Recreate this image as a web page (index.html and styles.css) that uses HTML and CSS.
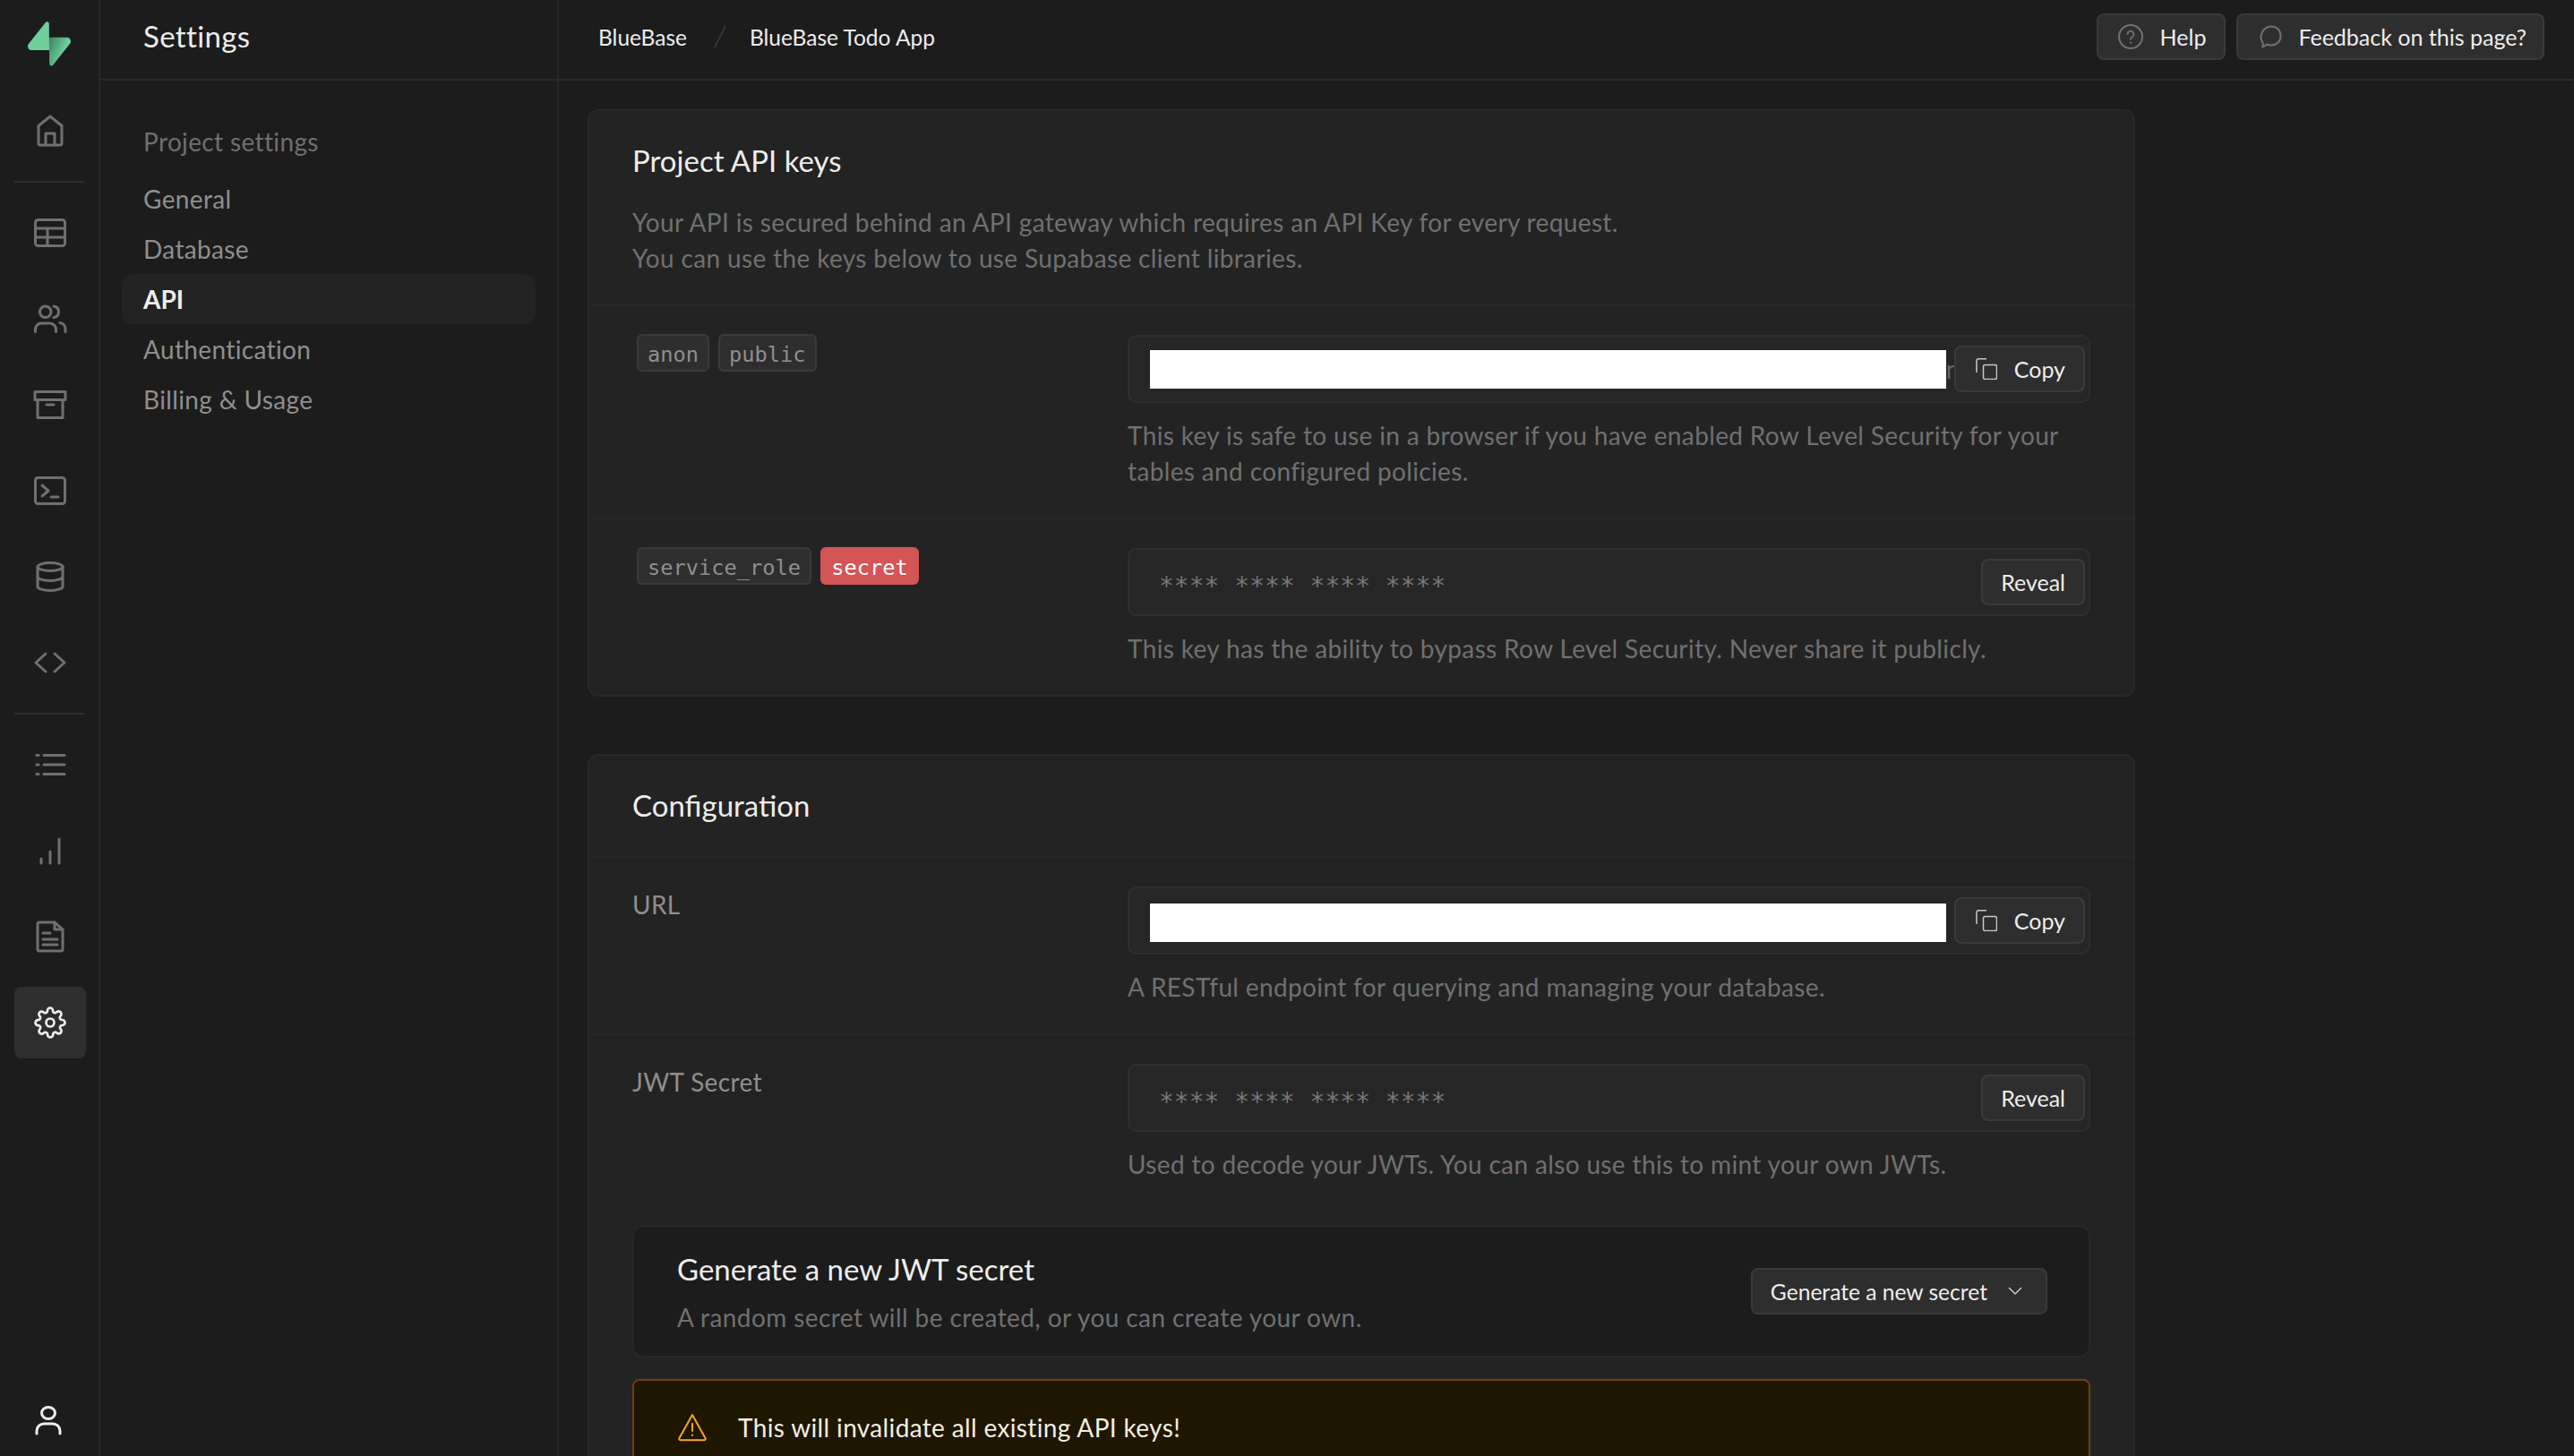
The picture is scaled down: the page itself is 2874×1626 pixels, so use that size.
FILE: index.html
```html
<!DOCTYPE html>
<html>
<head>
<meta charset="UTF-8">
<title>API Settings</title>
<link rel="stylesheet" href="styles.css">
</head>
<body>
<div class="app">
	<nav class="rail">
		<a class="logo">
			<svg width="48" height="50" viewBox="0 0 109 113">
				<defs>
					<linearGradient id="boltShade" x1="54" y1="55" x2="94" y2="72" gradientUnits="userSpaceOnUse">
						<stop offset="0" stop-color="#3f8a66"/>
						<stop offset="1" stop-color="#6fcf9c"/>
					</linearGradient>
				</defs>
				<path fill="url(#boltShade)" d="M63.7 110.3C60.8 113.9 55 111.9 55 107.3L54 40.1H99.2C107.4 40.1 112 49.5 106.9 55.9L63.7 110.3Z"/>
				<path fill="#6fcf9c" d="M45.3 2.1C48.2-1.5 54 .4 54 5L54.5 72.3H9.8C1.6 72.3-2.9 62.8 2.2 56.4L45.3 2.1Z"/>
			</svg>
		</a>
		<a class="railItem home">
			<svg class="ico" viewBox="0 0 48 48"><path d="M11 18.500 24 8l13 10.500V38a2 2 0 0 1-2 2H13a2 2 0 0 1-2-2V18.500Z"/><path d="M19 40V27h10v13"/></svg>
		</a>
		<div class="railLine"></div>
		<a class="railItem">
			<svg class="ico" viewBox="0 0 48 48"><rect x="7.500" y="9.500" width="33" height="29" rx="3"/><path d="M7.500 19h33M7.500 29h33M21 19v19.500"/></svg>
		</a>
		<a class="railItem">
			<svg class="ico" viewBox="0 0 48 48"><circle cx="18.700" cy="16.300" r="6.300"/><path d="M28 10c3.500.4 5.500 3 5.500 6.300s-2 5.800-5.500 6.300"/><path d="M7.500 38.500V36c0-4 3-7 7-7h9c4 0 7 3 7 7v2.500"/><path d="M35 28.500c3.500.5 6 3.400 6 7v3"/></svg>
		</a>
		<a class="railItem">
			<svg class="ico" viewBox="0 0 48 48"><path d="M7 9.500h34v9H7zM10 18.500v20h28v-20M20 24h8"/></svg>
		</a>
		<a class="railItem">
			<svg class="ico" viewBox="0 0 48 48"><rect x="7.500" y="9.500" width="33" height="29" rx="3"/><path d="m15 18 7 6-7 6M25 31h8"/></svg>
		</a>
		<a class="railItem">
			<svg class="ico" viewBox="0 0 48 48"><ellipse cx="24" cy="13" rx="14" ry="4.500"/><path d="M10 13v22c0 2.500 6.300 4.500 14 4.500S38 37.500 38 35V13M10 24c0 2.500 6.300 4.500 14 4.500S38 26.500 38 24"/></svg>
		</a>
		<a class="railItem">
			<svg class="ico" viewBox="0 0 48 48"><path d="M19 14 8 24l11 10M29 14l11 10-11 10"/></svg>
		</a>
		<div class="railLine"></div>
		<a class="railItem">
			<svg class="ico" viewBox="0 0 48 48"><path d="M17 13.500h23M17 24h23M17 34.500h23M9 13.500h2M9 24h2M9 34.500h2"/></svg>
		</a>
		<a class="railItem">
			<svg class="ico" viewBox="0 0 48 48"><path d="M14 33v5M24 25v13M34 11v27"/></svg>
		</a>
		<a class="railItem">
			<svg class="ico" viewBox="0 0 48 48"><path d="M10 10a2 2 0 0 1 2-2h17l9 8v22a2 2 0 0 1-2 2H12a2 2 0 0 1-2-2V10Z"/><path d="M29 8v8h9M16 20h8M16 27h16M16 33h16"/></svg>
		</a>
		<a class="railItem active">
			<svg class="gear" viewBox="0 0 24 24"><circle cx="12" cy="12" r="3"/><path d="M19.4 15a1.65 1.65 0 0 0 .33 1.82l.06.06a2 2 0 0 1 0 2.83 2 2 0 0 1-2.83 0l-.06-.06a1.65 1.65 0 0 0-1.82-.33 1.65 1.65 0 0 0-1 1.51V21a2 2 0 0 1-2 2 2 2 0 0 1-2-2v-.09A1.65 1.65 0 0 0 9 19.4a1.65 1.65 0 0 0-1.82.33l-.06.06a2 2 0 0 1-2.83 0 2 2 0 0 1 0-2.83l.06-.06a1.65 1.65 0 0 0 .33-1.82 1.65 1.65 0 0 0-1.51-1H3a2 2 0 0 1-2-2 2 2 0 0 1 2-2h.09A1.65 1.65 0 0 0 4.600 9a1.65 1.65 0 0 0-.33-1.82l-.06-.06a2 2 0 0 1 0-2.83 2 2 0 0 1 2.83 0l.06.06a1.65 1.65 0 0 0 1.82.33H9a1.65 1.65 0 0 0 1-1.51V3a2 2 0 0 1 2-2 2 2 0 0 1 2 2v.09a1.65 1.65 0 0 0 1 1.51 1.65 1.65 0 0 0 1.82-.33l.06-.06a2 2 0 0 1 2.83 0 2 2 0 0 1 0 2.83l-.06.06a1.65 1.65 0 0 0-.33 1.82V9a1.65 1.65 0 0 0 1.51 1H21a2 2 0 0 1 2 2 2 2 0 0 1-2 2h-.09a1.65 1.65 0 0 0-1.51 1z"/></svg>
		</a>
		<a class="railUser">
			<svg class="userIco" viewBox="0 0 36 36"><ellipse cx="18" cy="10" rx="7.500" ry="6.500"/><path d="M5 33v-3c0-5 4-8 8-8h10c4 0 8 3 8 8v3"/></svg>
		</a>
	</nav>

	<aside class="sideNav">
		<header class="sideHead">Settings</header>
		<div class="sideBody">
			<p class="sideLabel">Project settings</p>
			<a class="sideLink">General</a>
			<a class="sideLink">Database</a>
			<a class="sideLink current">API</a>
			<a class="sideLink">Authentication</a>
			<a class="sideLink">Billing &amp; Usage</a>
		</div>
	</aside>

	<main class="main">
		<header class="topBar">
			<div class="crumbs">
				<span>BlueBase</span>
				<svg class="crumbSep" viewBox="0 0 14 26"><path d="M13 1 1 25"/></svg>
				<span>BlueBase Todo App</span>
			</div>
			<div class="topActions">
				<a class="btn">
					<svg class="btnIco" viewBox="0 0 28 28"><circle cx="14" cy="14" r="13"/><path d="M10.500 11a3.500 3.500 0 1 1 5.500 3c-1.300.8-2 1.500-2 3M14 20.500v.5"/></svg>
					Help
				</a>
				<a class="btn feedback">
					<svg class="btnIco" viewBox="0 0 28 28"><path d="M5 25.500c.8-2 1-3 .6-4.500C3.800 18.500 3 16 3.500 13 4.500 7 9 2.500 15 2.500c6 0 10.500 4.500 10.500 10.500S21 23.500 15 23.500c-2 0-3.500-.3-5-1-1.500 1.500-3 2.500-5 3Z"/></svg>
					Feedback on this page?
				</a>
			</div>
		</header>

		<div class="content">
			<section class="card">
				<div class="cardHead">
					<h2 class="cardTitle">Project API keys</h2>
					<p class="cardDesc">Your API is secured behind an API gateway which requires an API Key for every request.<br>You can use the keys below to use Supabase client libraries.</p>
				</div>
				<div class="row">
					<div class="tags"><code class="tag">anon</code><code class="tag">public</code></div>
					<div>
						<div class="field">
							<div class="redact"></div>
							<span class="peek">n</span>
							<a class="btn small"><svg class="copyIco" viewBox="0 0 24 24"><rect x="8.500" y="7.500" width="15" height="16" rx="2"/><path d="M12 .800H3a2 2 0 0 0-2 2V16"/></svg>Copy</a>
						</div>
						<p class="help">This key is safe to use in a browser if you have enabled Row Level Security for your tables and configured policies.</p>
					</div>
				</div>
				<div class="row">
					<div class="tags"><code class="tag">service_role</code><code class="tag danger">secret</code></div>
					<div>
						<div class="field">
							<span class="mask">**** **** **** ****</span>
							<a class="btn small">Reveal</a>
						</div>
						<p class="help">This key has the ability to bypass Row Level Security. Never share it publicly.</p>
					</div>
				</div>
			</section>

			<section class="card">
				<div class="cardHead">
					<h2 class="cardTitle">Configuration</h2>
				</div>
				<div class="row">
					<label class="rowLabel">URL</label>
					<div>
						<div class="field">
							<div class="redact low"></div>
							<span class="peek"></span>
							<a class="btn small"><svg class="copyIco" viewBox="0 0 24 24"><rect x="8.500" y="7.500" width="15" height="16" rx="2"/><path d="M12 .800H3a2 2 0 0 0-2 2V16"/></svg>Copy</a>
						</div>
						<p class="help">A RESTful endpoint for querying and managing your database.</p>
					</div>
				</div>
				<div class="row last">
					<label class="rowLabel">JWT Secret</label>
					<div>
						<div class="field">
							<span class="mask">**** **** **** ****</span>
							<a class="btn small">Reveal</a>
						</div>
						<p class="help">Used to decode your JWTs. You can also use this to mint your own JWTs.</p>
					</div>
				</div>
				<div class="genBox">
					<div class="genText">
						<h3 class="genTitle">Generate a new JWT secret</h3>
						<p class="genSub">A random secret will be created, or you can create your own.</p>
					</div>
					<a class="btn gen">Generate a new secret<svg class="chev" viewBox="0 0 16 10"><path d="m1 1 7 7 7-7"/></svg></a>
				</div>
				<div class="warn">
					<svg class="warnIco" viewBox="0 0 34 32"><path d="M17 2 2.500 28a1.500 1.500 0 0 0 1.300 2.200h26.400a1.500 1.500 0 0 0 1.300-2.200L17 2ZM17 12v8M17 24.500v.5"/></svg>
					<span>This will invalidate all existing API keys!</span>
				</div>
			</section>
		</div>
	</main>
</div>
</body>
</html>
```

FILE: styles.css
```css
* {
	box-sizing: border-box;
}

html, body {
	margin: 0;
	height: 100%;
	overflow: hidden;
}

body {
	background: #1c1c1c;
	font-family: "Lato", "Liberation Sans", sans-serif;
	font-size: 28px;
	letter-spacing: .36px;
	color: #ededed;
}

p, h2, h3 {
	margin: 0;
	font-weight: 400;
}

.app {
	display: flex;
	height: 1626px;
}

/* icon rail */
.rail {
	width: 112px;
	flex: none;
	border-right: 2px solid #282828;
	padding: 24px 14px 0 16px;
	display: flex;
	flex-direction: column;
	align-items: flex-start;
	gap: 16px;
}

.logo {
	display: flex;
	justify-content: center;
	width: 78px;
	height: 52px;
	margin-bottom: 14px;
}

.railItem {
	width: 80px;
	height: 80px;
	flex: none;
	display: flex;
	align-items: center;
	justify-content: center;
	border-radius: 8px;
}

.railItem.active {
	background: #2e2e2e;
}

.railLine {
	width: 78px;
	height: 2px;
	flex: none;
	background: #2e2e2e;
}

.ico {
	width: 48px;
	height: 48px;
	fill: none;
	stroke: #707070;
	stroke-width: 3;
	stroke-linecap: round;
	stroke-linejoin: round;
}

.gear {
	width: 36px;
	height: 36px;
	fill: none;
	stroke: #ededed;
	stroke-width: 1.8;
}

.railUser {
	margin-top: auto;
	margin-bottom: 22px;
	width: 76px;
	display: flex;
	justify-content: center;
}

.userIco {
	width: 36px;
	height: 36px;
	fill: none;
	stroke: #ededed;
	stroke-width: 3;
	stroke-linecap: round;
}

/* settings menu */
.sideNav {
	width: 512px;
	flex: none;
	border-right: 2px solid #282828;
}

.sideHead {
	height: 90px;
	border-bottom: 2px solid #282828;
	padding: 0 48px 8px;
	display: flex;
	align-items: center;
	font-size: 33px;
}

.sideBody {
	padding: 48px 24px;
	display: flex;
	flex-direction: column;
}

.sideLabel {
	padding: 0 24px;
	height: 40px;
	line-height: 40px;
	color: #6f6f6f;
	margin-bottom: 16px;
}

.sideLink {
	height: 56px;
	line-height: 56px;
	padding: 0 24px;
	color: #8f8f8f;
	border-radius: 12px;
}

.sideLink.current {
	background: #232323;
	color: #ededed;
	font-weight: 700;
	letter-spacing: 0;
}

/* main */
.main {
	flex: 1;
	min-width: 0;
}

.topBar {
	height: 90px;
	border-bottom: 2px solid #282828;
	padding: 0 33px 6px 44px;
	display: flex;
	align-items: center;
	justify-content: space-between;
}

.crumbs {
	display: flex;
	align-items: center;
	font-size: 24.5px;
	letter-spacing: 0;
}

.crumbSep {
	width: 14px;
	height: 26px;
	margin: 0 26px 0 30px;
	fill: none;
	stroke: #3e3e3e;
	stroke-width: 1.5;
}

.topActions {
	display: flex;
	gap: 12px;
}

.btn {
	height: 52px;
	display: flex;
	align-items: center;
	flex: none;
	padding: 0 20px;
	background: #2e2e2e;
	border: 2px solid #3a3a3a;
	border-radius: 8px;
	font-size: 25px;
	letter-spacing: 0;
	color: #ededed;
	gap: 19px;
}

.btn.feedback {
	padding-right: 18px;
	gap: 17px;
}

.btn.gen {
	font-size: 24.6px;
	padding-right: 26px;
	gap: 23px;
}

.btnIco {
	width: 28px;
	height: 28px;
	margin-left: 2px;
	fill: none;
	stroke: #707070;
	stroke-width: 2;
	stroke-linecap: round;
	stroke-linejoin: round;
}

.content {
	padding: 32px;
	width: 1792px;
	display: flex;
	flex-direction: column;
	gap: 64px;
}

.card {
	background: #232323;
	border: 2px solid #282828;
	border-radius: 12px;
}

.cardHead {
	padding: 32px 48px;
}

.cardTitle {
	font-size: 33px;
	letter-spacing: 0;
	line-height: 46px;
	margin-bottom: 2px;
}

.cardDesc {
	margin-top: 26px;
	line-height: 40px;
	color: #707070;
}

.row {
	display: grid;
	grid-template-columns: 553px minmax(0, 1fr);
	padding: 32px 48px;
	border-top: 2px solid #282828;
}

.row.last {
	padding-bottom: 48px;
}

.rowLabel {
	color: #8f8f8f;
	line-height: 40px;
}

.tags {
	display: flex;
	align-items: flex-start;
	gap: 10px;
	margin: -1px 0 0 5px;
}

.tag {
	height: 42px;
	line-height: 42px;
	padding: 0 10px;
	background: #2e2e2e;
	border: 2px solid #3a3a3a;
	border-radius: 6px;
	font-family: "DejaVu Sans Mono", monospace;
	font-size: 23.7px;
	letter-spacing: 0;
	color: #8f8f8f;
}

.tag.danger {
	background: #d35556;
	border-color: #d35556;
	color: #fff;
}

.field {
	height: 76px;
	display: flex;
	align-items: center;
	background: #262626;
	border: 2px solid #2e2e2e;
	border-radius: 10px;
	padding: 0 4px 0 23px;
}

.redact {
	width: 889px;
	height: 43px;
	background: #fff;
}

.redact.low {
	margin-top: 5px;
}

.peek {
	width: 9px;
	overflow: hidden;
	color: #666;
	line-height: 40px;
}

.mask {
	flex: 1;
	padding: 8px 0 0 10px;
	font-family: "DejaVu Sans Mono", monospace;
	font-size: 28px;
	letter-spacing: 0;
	color: #777;
}

.btn.small {
	margin-left: auto;
}

.copyIco {
	width: 24px;
	height: 24px;
	margin-left: 2px;
	fill: none;
	stroke: #c8c8c8;
	stroke-width: 1.5;
}

.help {
	margin-top: 16px;
	line-height: 40px;
	color: #707070;
}

.genBox {
	margin: 0 48px;
	height: 148px;
	background: #1c1c1c;
	border: 2px solid #282828;
	border-radius: 12px;
	padding: 0 46px 0 48px;
	display: flex;
	align-items: center;
	justify-content: space-between;
}

.genText {
	padding-top: 3px;
}

.genTitle {
	font-size: 33px;
	letter-spacing: 0;
	line-height: 44px;
}

.genSub {
	margin-top: 10px;
	line-height: 44px;
	letter-spacing: .42px;
	color: #707070;
}

.chev {
	width: 16px;
	height: 10px;
	fill: none;
	stroke: #c8c8c8;
	stroke-width: 1.5;
}

.warn {
	margin: 24px 48px 0;
	height: 108px;
	background: #1f1600;
	border: 2px solid #6b4113;
	border-radius: 8px;
	padding: 0 48px;
	display: flex;
	align-items: center;
	gap: 34px;
	color: #f3efe0;
}

.warnIco {
	width: 34px;
	height: 32px;
	fill: none;
	stroke: #f5a623;
	stroke-width: 2;
	stroke-linejoin: round;
	stroke-linecap: round;
}
```
